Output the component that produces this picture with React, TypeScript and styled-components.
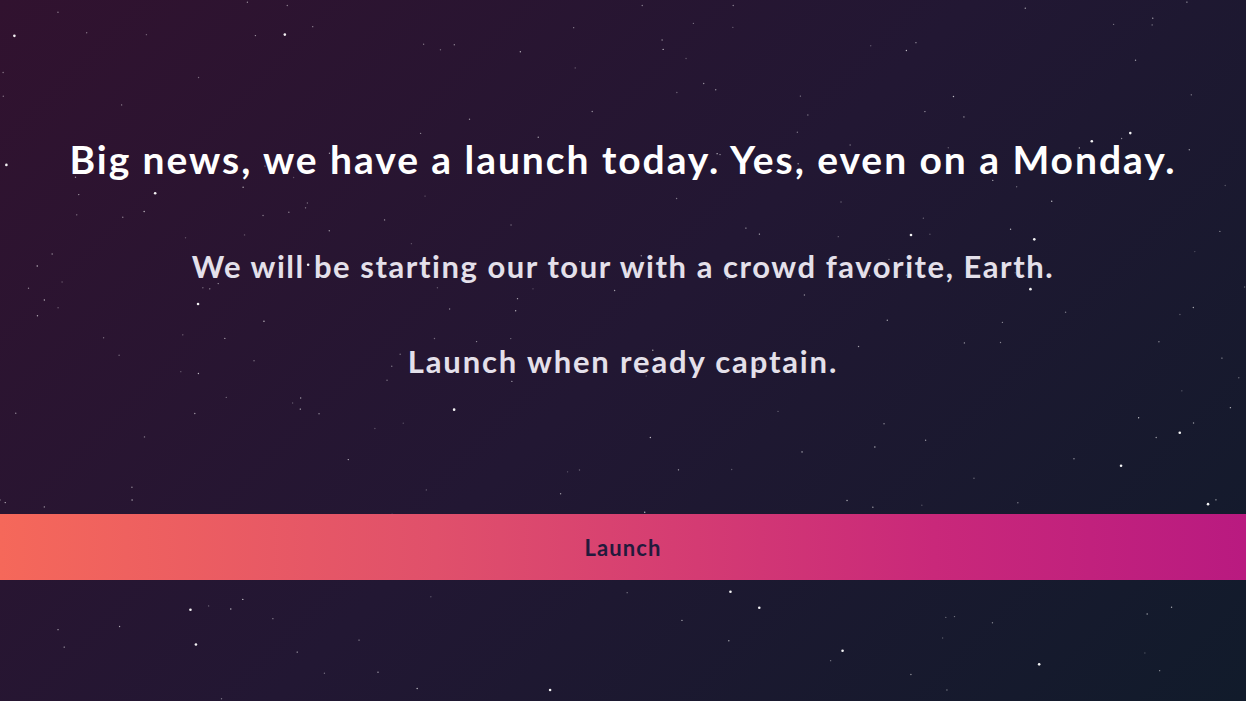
import React from "react";
import styled, { createGlobalStyle } from "styled-components";

const GlobalStyle = createGlobalStyle`
  html, body { margin: 0; padding: 0; height: 100%; }
  body {
    background: linear-gradient(135deg, #31122f 0%, #221733 50%, #111b2b 100%);
    font-family: Lato, "Noto Sans", sans-serif;
    overflow: hidden;
  }
`;

const Page = styled.main`
  position: relative;
  width: 100vw;
  height: 100vh;
  display: flex;
  flex-direction: column;
  align-items: stretch;
`;

const Sky = styled.svg`
  position: absolute;
  inset: 0;
  width: 100%;
  height: 100%;
  pointer-events: none;
`;

const Content = styled.section`
  position: relative;
  display: flex;
  flex-direction: column;
  align-items: center;
  padding-top: 133px;
`;

const Headline = styled.h1`
  margin: 0;
  color: #ffffff;
  font-size: 39px;
  font-weight: 700;
  line-height: 52px;
  letter-spacing: 1.95px;
`;

const Line = styled.p<{ $gap: number; $spacing: number }>`
  margin: ${(p) => p.$gap}px 0 0;
  color: #e4e0ea;
  font-size: 31px;
  font-weight: 700;
  line-height: 40px;
  letter-spacing: ${(p) => p.$spacing}px;
`;

const LaunchBar = styled.button`
  position: relative;
  margin-top: 133px;
  height: 66px;
  width: 100%;
  border: 0;
  padding: 0;
  background: linear-gradient(90deg, #f5685a 0%, #e0506b 35%, #c9287a 75%, #b91a80 100%);
  color: #221a3c;
  font-family: Lato, "Noto Sans", sans-serif;
  font-size: 22px;
  font-weight: 700;
  letter-spacing: 1.1px;
  cursor: pointer;
`;

function makeStars() {
  let s = 12345;
  const rnd = () => {
    s = (s * 16807) % 2147483647;
    return (s - 1) / 2147483646;
  };
  const stars: { x: number; y: number; r: number; o: number }[] = [];
  for (let i = 0; i < 260; i++) {
    const big = rnd() < 0.12;
    stars.push({
      x: rnd() * 1246,
      y: rnd() * 701,
      r: big ? 1.3 : 0.7,
      o: big ? 0.95 : 0.25 + rnd() * 0.5,
    });
  }
  return stars;
}

const stars = makeStars();

export default function App() {
  return (
    <>
      <GlobalStyle />
      <Page>
        <Sky viewBox="0 0 1246 701" preserveAspectRatio="none">
          {stars.map((st, i) => (
            <circle key={i} cx={st.x} cy={st.y} r={st.r} fill="#ffffff" opacity={st.o} />
          ))}
        </Sky>
        <Content>
          <Headline>Big news, we have a launch today. Yes, even on a Monday.</Headline>
          <Line $gap={61} $spacing={1.55}>We will be starting our tour with a crowd favorite, Earth.</Line>
          <Line $gap={55} $spacing={1.85}>Launch when ready captain.</Line>
        </Content>
        <LaunchBar>Launch</LaunchBar>
      </Page>
    </>
  );
}
